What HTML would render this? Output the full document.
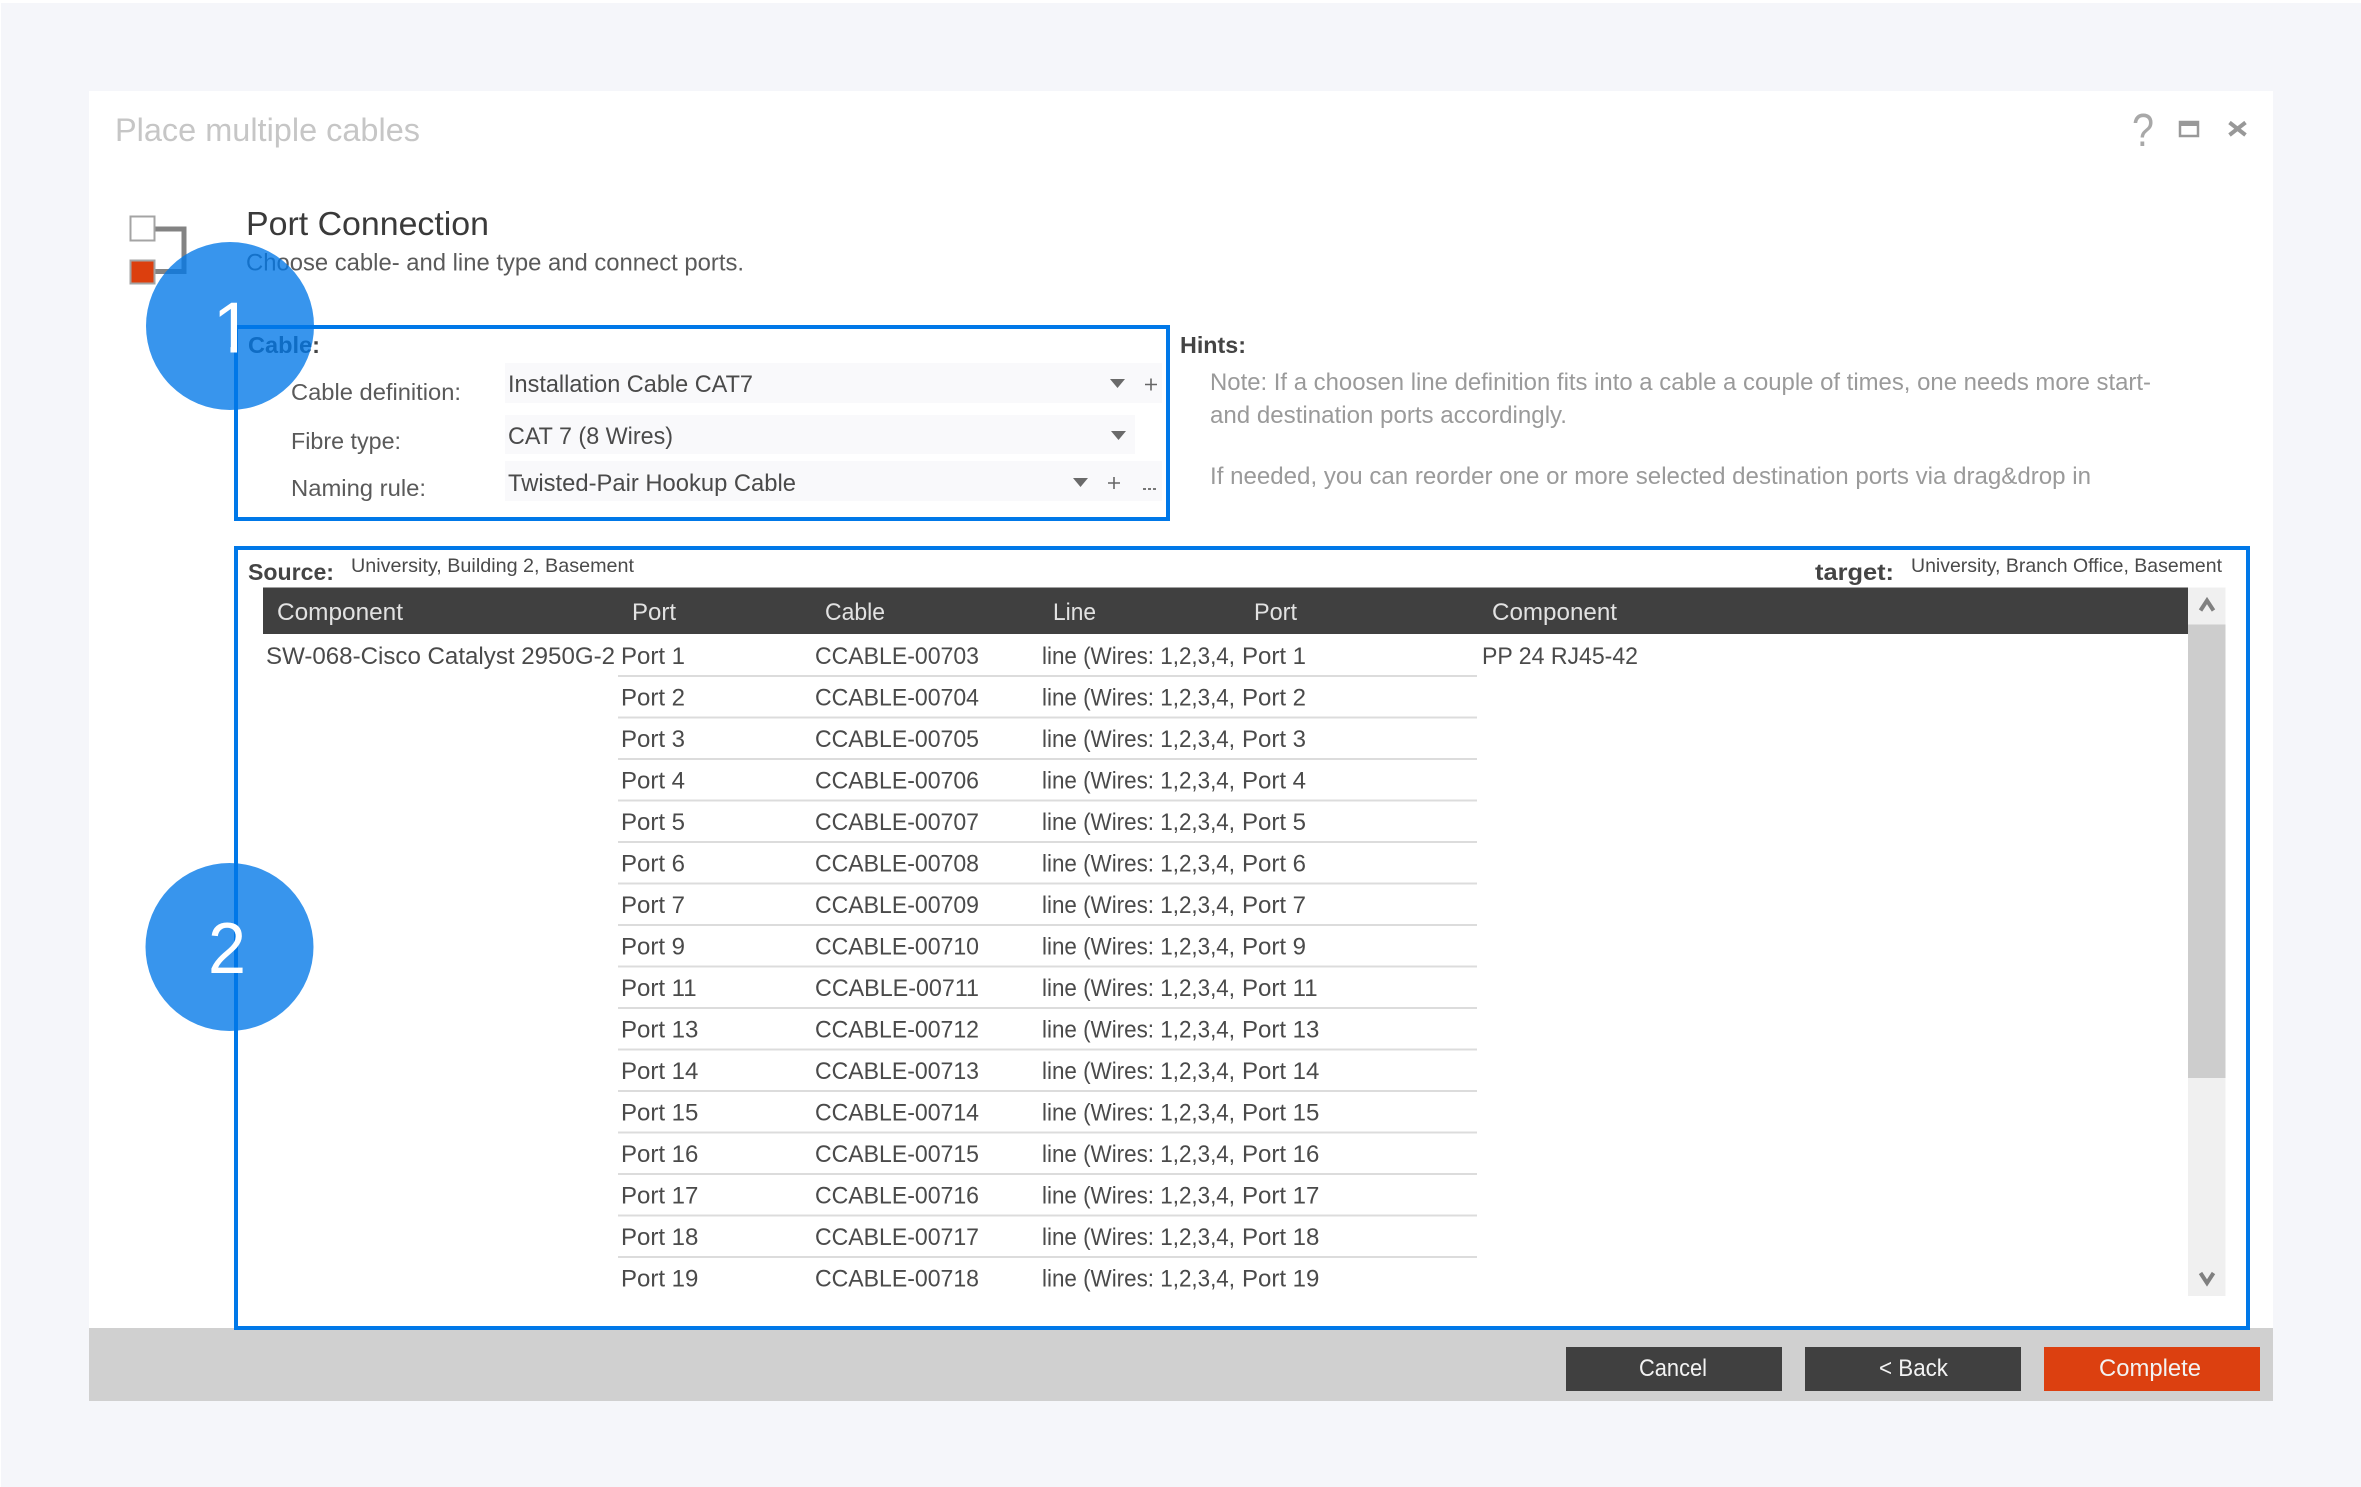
<!DOCTYPE html>
<html lang="en">
<head>
<meta charset="utf-8">
<title>Place multiple cables</title>
<style>
html,body{margin:0;padding:0;background:#fff;}
body{width:2361px;height:1487px;overflow:hidden;}
svg{display:block;}
text{font-family:"Liberation Sans",sans-serif;font-size:24px;fill:#4a4a4a;white-space:pre;}
.b{font-weight:bold;fill:#444;font-size:23px;}
.l{fill:#5a5a5a;font-size:23px;}
.h{fill:#9a9a9a;font-size:24px;}
.s{font-size:19.5px;fill:#4a4a4a;}
.th{fill:#e2e2e2;}
.btn{fill:#f2f2f2;}
</style>
</head>
<body>
<svg width="2361" height="1487" viewBox="0 0 2361 1487" xmlns="http://www.w3.org/2000/svg">
<defs>
<clipPath id="one"><path d="M200 290H237V353H230.500V346H200Z"/></clipPath>
</defs>
<rect width="2361" height="1487" fill="#fff"/>
<rect x="1" y="3" width="2360" height="1484" fill="#f5f6fa"/>
<rect x="89" y="91" width="2184" height="1237" fill="#fff"/>
<rect x="89" y="1328" width="2184" height="73" fill="#d0d0d0"/>

<text x="115" y="141" style="font-size:32px;fill:#c6c6c6" textLength="305" lengthAdjust="spacingAndGlyphs">Place multiple cables</text>

<text x="2132" y="146" style="font-size:46px;fill:#a8a8a8" textLength="22" lengthAdjust="spacingAndGlyphs">?</text>
<rect x="2180" y="122" width="18" height="14" fill="none" stroke="#999" stroke-width="2.500"/>
<rect x="2180" y="121" width="18" height="5" fill="#999"/>
<path d="M2229.500 122.500L2245.500 135M2245.500 122.500L2229.500 135" stroke="#989898" stroke-width="4" fill="none"/>

<path d="M155 229H184V271.500H155" fill="none" stroke="#838383" stroke-width="5"/>
<rect x="130.500" y="216.500" width="24" height="24" fill="#fff" stroke="#a4a4a4" stroke-width="2"/>
<rect x="130.500" y="260.500" width="24" height="23" fill="#dc3f0e" stroke="#a4a4a4" stroke-width="2"/>

<text x="246" y="235" style="font-size:33px;fill:#3a3a3a" textLength="243" lengthAdjust="spacingAndGlyphs">Port Connection</text>
<text x="246" y="270.500" class="l" style="font-size:24px" textLength="498" lengthAdjust="spacingAndGlyphs">Choose cable- and line type and connect ports.</text>

<text x="248" y="353" class="b" textLength="72" lengthAdjust="spacingAndGlyphs">Cable:</text>
<text x="291" y="400" class="l" textLength="170" lengthAdjust="spacingAndGlyphs">Cable definition:</text>
<text x="291" y="449" class="l" textLength="110" lengthAdjust="spacingAndGlyphs">Fibre type:</text>
<text x="291" y="496" class="l" textLength="135" lengthAdjust="spacingAndGlyphs">Naming rule:</text>

<rect x="505" y="363" width="657" height="40" fill="#f9f9fb"/>
<rect x="505" y="415" width="630" height="39" fill="#f9f9fb"/>
<rect x="505" y="461" width="657" height="40" fill="#f9f9fb"/>
<text x="508" y="392" textLength="245" lengthAdjust="spacingAndGlyphs">Installation Cable CAT7</text>
<text x="508" y="444" textLength="165" lengthAdjust="spacingAndGlyphs">CAT 7 (8 Wires)</text>
<text x="508" y="491" textLength="288" lengthAdjust="spacingAndGlyphs">Twisted-Pair Hookup Cable</text>
<path d="M1110 379H1125L1117.500 388Z" fill="#6a6a6a"/>
<path d="M1111 431H1126L1118.500 440Z" fill="#6a6a6a"/>
<path d="M1073 478H1088L1080.500 487Z" fill="#6a6a6a"/>
<path d="M1145 384.500H1157M1151 378.500V390.500" stroke="#666" stroke-width="1.600"/>
<path d="M1108 483H1120M1114 477V489" stroke="#666" stroke-width="1.600"/>
<path d="M1143 489h3M1148 489h3M1153 489h3" stroke="#777" stroke-width="2"/>

<text x="1180" y="353" class="b" textLength="66" lengthAdjust="spacingAndGlyphs">Hints:</text>
<text x="1210" y="390" class="h" textLength="941" lengthAdjust="spacingAndGlyphs">Note: If a choosen line definition fits into a cable a couple of times, one needs more start-</text>
<text x="1210" y="423" class="h" textLength="357" lengthAdjust="spacingAndGlyphs">and destination ports accordingly.</text>
<text x="1210" y="484" class="h" textLength="881" lengthAdjust="spacingAndGlyphs">If needed, you can reorder one or more selected destination ports via drag&amp;drop in</text>

<text x="248" y="580" class="b" textLength="86" lengthAdjust="spacingAndGlyphs">Source:</text>
<text x="351" y="572" class="s" textLength="283" lengthAdjust="spacingAndGlyphs">University, Building 2, Basement</text>
<text x="1815" y="580" class="b" textLength="79" lengthAdjust="spacingAndGlyphs">target:</text>
<text x="1911" y="572" class="s" textLength="311" lengthAdjust="spacingAndGlyphs">University, Branch Office, Basement</text>

<rect x="263" y="587.500" width="1926" height="46.500" fill="#404040"/>
<text x="277" y="620" class="th" textLength="126" lengthAdjust="spacingAndGlyphs">Component</text>
<text x="632" y="620" class="th" textLength="44" lengthAdjust="spacingAndGlyphs">Port</text>
<text x="825" y="620" class="th" textLength="60" lengthAdjust="spacingAndGlyphs">Cable</text>
<text x="1053" y="620" class="th" textLength="43" lengthAdjust="spacingAndGlyphs">Line</text>
<text x="1254" y="620" class="th" textLength="43" lengthAdjust="spacingAndGlyphs">Port</text>
<text x="1492" y="620" class="th" textLength="125" lengthAdjust="spacingAndGlyphs">Component</text>

<rect x="2188" y="587.500" width="37.500" height="708.500" fill="#f0f0f0"/>
<rect x="2188" y="624.500" width="37.500" height="453.500" fill="#cdcdcd"/>
<path d="M2200.500 610.500L2207 600.500L2213.500 610.500" fill="none" stroke="#808080" stroke-width="4"/>
<path d="M2200.500 1273L2207 1283L2213.500 1273" fill="none" stroke="#808080" stroke-width="4"/>

<g fill="#dcdcdc">
<rect x="618" y="675" width="859" height="2"/><rect x="618" y="716.500" width="859" height="2"/><rect x="618" y="758" width="859" height="2"/><rect x="618" y="799.500" width="859" height="2"/><rect x="618" y="841" width="859" height="2"/><rect x="618" y="882.500" width="859" height="2"/><rect x="618" y="924" width="859" height="2"/><rect x="618" y="965.500" width="859" height="2"/><rect x="618" y="1007" width="859" height="2"/><rect x="618" y="1048.500" width="859" height="2"/><rect x="618" y="1090" width="859" height="2"/><rect x="618" y="1131.500" width="859" height="2"/><rect x="618" y="1173" width="859" height="2"/><rect x="618" y="1214.500" width="859" height="2"/><rect x="618" y="1256" width="859" height="2"/>
</g>

<text x="266" y="664" textLength="349" lengthAdjust="spacingAndGlyphs">SW-068-Cisco Catalyst 2950G-2</text>
<text x="1482" y="664" textLength="156" lengthAdjust="spacingAndGlyphs">PP 24 RJ45-42</text>

<text x="621" y="664">Port 1</text><text x="815" y="664" textLength="164" lengthAdjust="spacingAndGlyphs">CCABLE-00703</text><text x="1042" y="664" textLength="193" lengthAdjust="spacingAndGlyphs">line (Wires: 1,2,3,4,</text><text x="1242" y="664">Port 1</text>
<text x="621" y="705.500">Port 2</text><text x="815" y="705.500" textLength="164" lengthAdjust="spacingAndGlyphs">CCABLE-00704</text><text x="1042" y="705.500" textLength="193" lengthAdjust="spacingAndGlyphs">line (Wires: 1,2,3,4,</text><text x="1242" y="705.500">Port 2</text>
<text x="621" y="747">Port 3</text><text x="815" y="747" textLength="164" lengthAdjust="spacingAndGlyphs">CCABLE-00705</text><text x="1042" y="747" textLength="193" lengthAdjust="spacingAndGlyphs">line (Wires: 1,2,3,4,</text><text x="1242" y="747">Port 3</text>
<text x="621" y="788.500">Port 4</text><text x="815" y="788.500" textLength="164" lengthAdjust="spacingAndGlyphs">CCABLE-00706</text><text x="1042" y="788.500" textLength="193" lengthAdjust="spacingAndGlyphs">line (Wires: 1,2,3,4,</text><text x="1242" y="788.500">Port 4</text>
<text x="621" y="830">Port 5</text><text x="815" y="830" textLength="164" lengthAdjust="spacingAndGlyphs">CCABLE-00707</text><text x="1042" y="830" textLength="193" lengthAdjust="spacingAndGlyphs">line (Wires: 1,2,3,4,</text><text x="1242" y="830">Port 5</text>
<text x="621" y="871.500">Port 6</text><text x="815" y="871.500" textLength="164" lengthAdjust="spacingAndGlyphs">CCABLE-00708</text><text x="1042" y="871.500" textLength="193" lengthAdjust="spacingAndGlyphs">line (Wires: 1,2,3,4,</text><text x="1242" y="871.500">Port 6</text>
<text x="621" y="913">Port 7</text><text x="815" y="913" textLength="164" lengthAdjust="spacingAndGlyphs">CCABLE-00709</text><text x="1042" y="913" textLength="193" lengthAdjust="spacingAndGlyphs">line (Wires: 1,2,3,4,</text><text x="1242" y="913">Port 7</text>
<text x="621" y="954.500">Port 9</text><text x="815" y="954.500" textLength="164" lengthAdjust="spacingAndGlyphs">CCABLE-00710</text><text x="1042" y="954.500" textLength="193" lengthAdjust="spacingAndGlyphs">line (Wires: 1,2,3,4,</text><text x="1242" y="954.500">Port 9</text>
<text x="621" y="996">Port 11</text><text x="815" y="996" textLength="164" lengthAdjust="spacingAndGlyphs">CCABLE-00711</text><text x="1042" y="996" textLength="193" lengthAdjust="spacingAndGlyphs">line (Wires: 1,2,3,4,</text><text x="1242" y="996">Port 11</text>
<text x="621" y="1037.500">Port 13</text><text x="815" y="1037.500" textLength="164" lengthAdjust="spacingAndGlyphs">CCABLE-00712</text><text x="1042" y="1037.500" textLength="193" lengthAdjust="spacingAndGlyphs">line (Wires: 1,2,3,4,</text><text x="1242" y="1037.500">Port 13</text>
<text x="621" y="1079">Port 14</text><text x="815" y="1079" textLength="164" lengthAdjust="spacingAndGlyphs">CCABLE-00713</text><text x="1042" y="1079" textLength="193" lengthAdjust="spacingAndGlyphs">line (Wires: 1,2,3,4,</text><text x="1242" y="1079">Port 14</text>
<text x="621" y="1120.500">Port 15</text><text x="815" y="1120.500" textLength="164" lengthAdjust="spacingAndGlyphs">CCABLE-00714</text><text x="1042" y="1120.500" textLength="193" lengthAdjust="spacingAndGlyphs">line (Wires: 1,2,3,4,</text><text x="1242" y="1120.500">Port 15</text>
<text x="621" y="1162">Port 16</text><text x="815" y="1162" textLength="164" lengthAdjust="spacingAndGlyphs">CCABLE-00715</text><text x="1042" y="1162" textLength="193" lengthAdjust="spacingAndGlyphs">line (Wires: 1,2,3,4,</text><text x="1242" y="1162">Port 16</text>
<text x="621" y="1203.500">Port 17</text><text x="815" y="1203.500" textLength="164" lengthAdjust="spacingAndGlyphs">CCABLE-00716</text><text x="1042" y="1203.500" textLength="193" lengthAdjust="spacingAndGlyphs">line (Wires: 1,2,3,4,</text><text x="1242" y="1203.500">Port 17</text>
<text x="621" y="1245">Port 18</text><text x="815" y="1245" textLength="164" lengthAdjust="spacingAndGlyphs">CCABLE-00717</text><text x="1042" y="1245" textLength="193" lengthAdjust="spacingAndGlyphs">line (Wires: 1,2,3,4,</text><text x="1242" y="1245">Port 18</text>
<text x="621" y="1286.500">Port 19</text><text x="815" y="1286.500" textLength="164" lengthAdjust="spacingAndGlyphs">CCABLE-00718</text><text x="1042" y="1286.500" textLength="193" lengthAdjust="spacingAndGlyphs">line (Wires: 1,2,3,4,</text><text x="1242" y="1286.500">Port 19</text>

<rect x="1566" y="1347" width="216" height="44" fill="#404040"/>
<rect x="1805" y="1347" width="216" height="44" fill="#404040"/>
<rect x="2044" y="1347" width="216" height="44" fill="#dc4010"/>
<text x="1639" y="1376" class="btn" textLength="68" lengthAdjust="spacingAndGlyphs">Cancel</text>
<text x="1879" y="1376" class="btn" textLength="69" lengthAdjust="spacingAndGlyphs">&lt; Back</text>
<text x="2099" y="1376" class="btn" textLength="102" lengthAdjust="spacingAndGlyphs">Complete</text>

<rect x="236" y="327" width="932" height="192" fill="none" stroke="#0078e8" stroke-width="4"/>
<rect x="236" y="548" width="2012" height="780" fill="none" stroke="#0078e8" stroke-width="4"/>

<circle cx="230" cy="326" r="84" fill="rgba(0,119,232,.78)"/>
<circle cx="229.500" cy="947" r="84" fill="rgba(0,119,232,.78)"/>
<text x="212.700" y="352.700" style="font-size:72px;fill:#fff" clip-path="url(#one)">1</text>
<text x="208" y="973" style="font-size:72px;fill:#fff" textLength="38" lengthAdjust="spacingAndGlyphs">2</text>
</svg>
</body>
</html>
